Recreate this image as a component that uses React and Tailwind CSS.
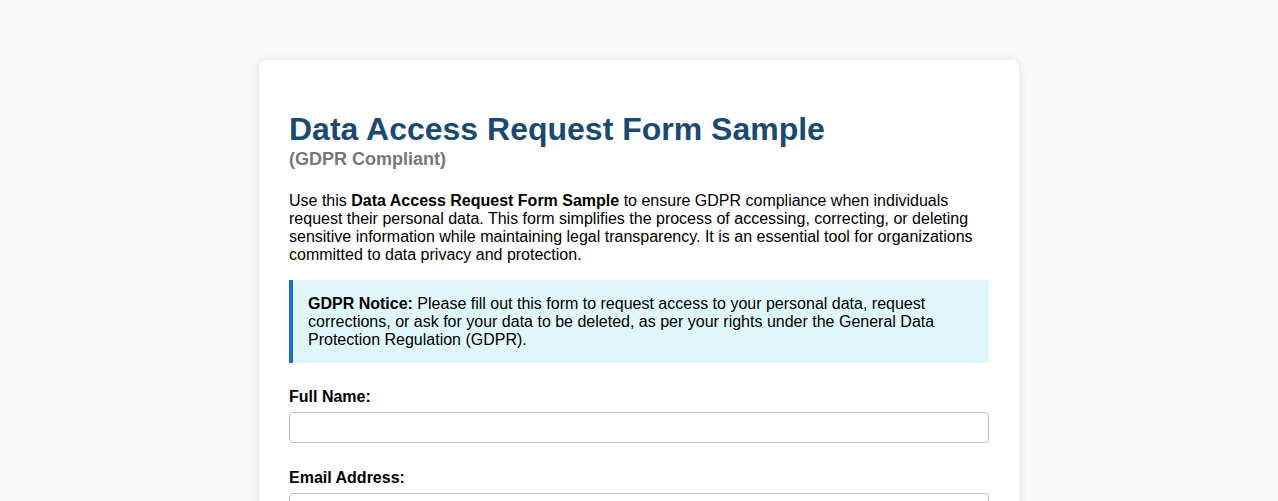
export default function App() {
  return (
    <div className="min-h-[501px] bg-[#f9f9f9] pt-[60px] pb-10" style={{ fontFamily: '"Liberation Sans", Arial, sans-serif' }}>
      <div className="mx-auto w-[760px] rounded-[8px] bg-white px-[30px] pt-[51px] pb-[30px] shadow-[0_0_10px_rgba(0,0,0,0.1)] text-black">
        <h1 className="text-[32px] font-bold leading-[1.15] text-[#1a4a72]">Data Access Request Form Sample</h1>
        <div className="mt-px text-[18px] font-bold leading-[1.15] text-[#777777]">(GDPR Compliant)</div>
        <p className="mt-[23px] text-[16px] leading-[18px]">
          Use this <strong>Data Access Request Form Sample</strong> to ensure GDPR compliance when individuals request their personal data. This form simplifies the process of accessing, correcting, or deleting sensitive information while maintaining legal transparency. It is an essential tool for organizations committed to data privacy and protection.
        </p>
        <div className="mt-[16px] border-l-4 border-[#1e6fbf] bg-[#e0f7fa] px-[15px] pt-[15px] pb-[14px] text-[16px] leading-[18px]">
          <strong>GDPR Notice:</strong> Please fill out this form to request access to your personal data, request corrections, or ask for your data to be deleted, as per your rights under the General Data Protection Regulation (GDPR).
        </div>
        <form className="mt-[25px]">
          <div className="mb-[26px]">
            <label className="block text-[16px] font-bold leading-[18px] mb-[6px]">Full Name:</label>
            <input type="text" className="block h-[31px] w-full rounded-[4px] border border-[#bbbbbb] px-2 text-[14px]" />
          </div>
          <div className="mb-[26px]">
            <label className="block text-[16px] font-bold leading-[18px] mb-[6px]">Email Address:</label>
            <input type="email" className="block h-[31px] w-full rounded-[4px] border border-[#bbbbbb] px-2 text-[14px]" />
          </div>
        </form>
      </div>
    </div>
  );
}
